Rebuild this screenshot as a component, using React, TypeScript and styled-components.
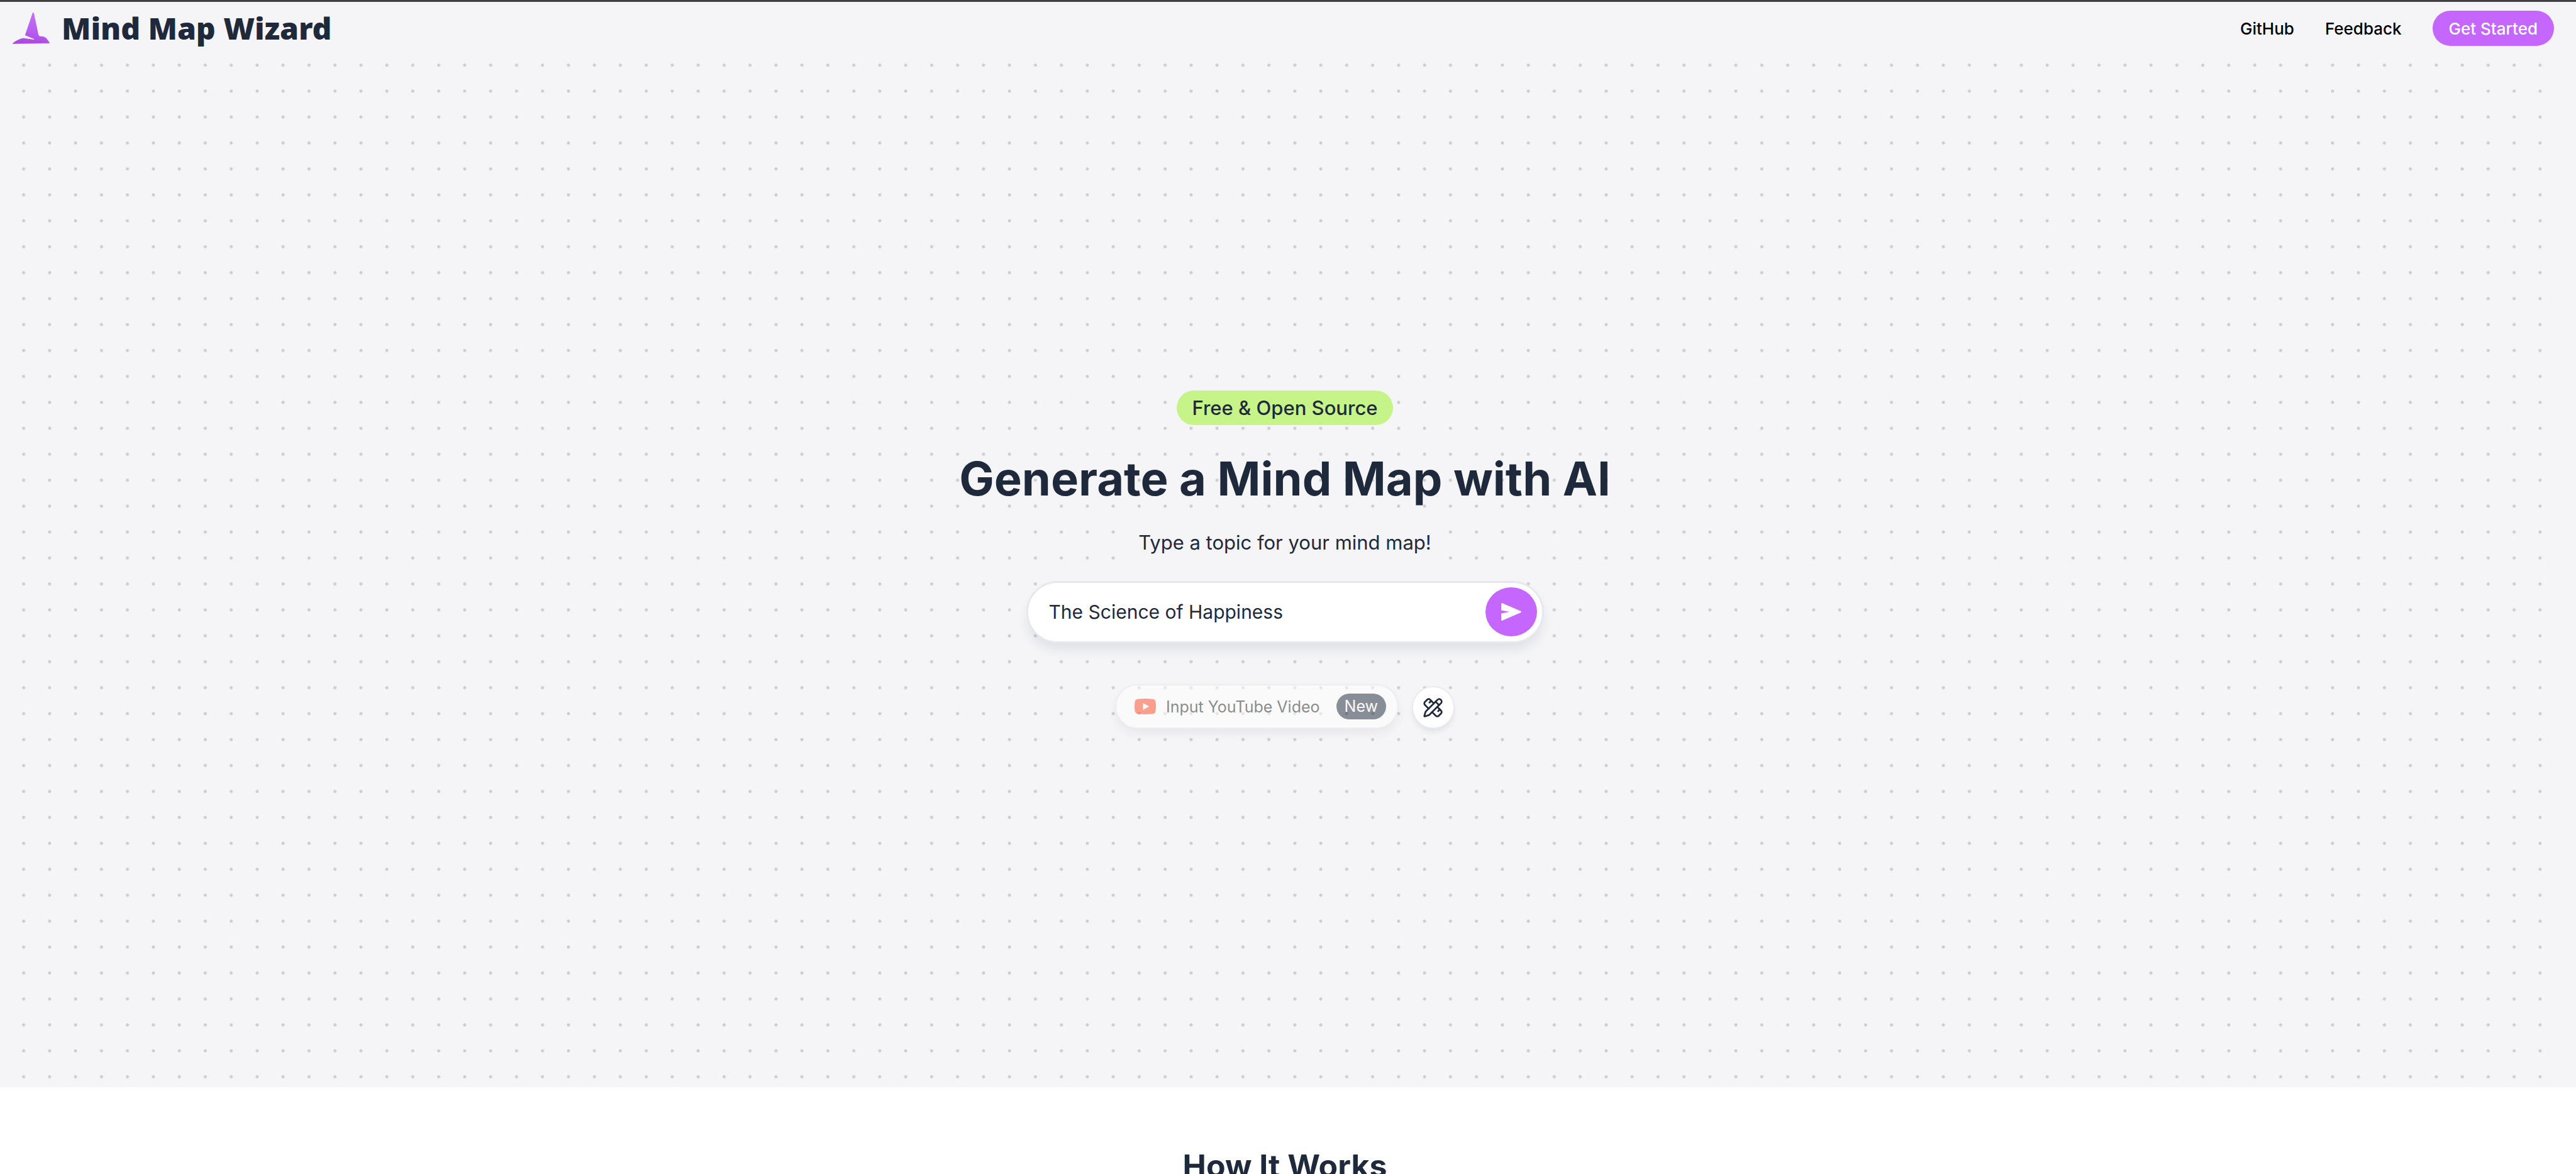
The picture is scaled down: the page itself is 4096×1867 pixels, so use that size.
import React, { useState } from "react";
import styled, { createGlobalStyle } from "styled-components";
import { PencilRuler } from "lucide-react";

const GlobalStyle = createGlobalStyle`
  *, *::before, *::after { box-sizing: border-box; }
  body {
    margin: 0;
    background: #ffffff;
    color: #1e293b;
    font-family: Inter, "Liberation Sans", sans-serif;
  }
  h1, h2, p { margin: 0; }
  button, input { font: inherit; color: inherit; border: 0; margin: 0; padding: 0; }
  button { cursor: pointer; }
`;

const Page = styled.div`
  height: 100vh;
  overflow: hidden;
  border-top: 3px solid #404040;
`;

const Hero = styled.div`
  background: #f5f5f8;
`;

const Header = styled.header`
  display: flex;
  align-items: center;
  justify-content: space-between;
  padding: 14px 35px 10px 20px;
`;

const Brand = styled.a`
  display: flex;
  align-items: center;
  gap: 19px;
  color: inherit;
  text-decoration: none;
  font-family: "Noto Sans", "Open Sans", sans-serif;
  font-size: 48px;
  font-weight: 900;
  line-height: 56px;
`;

const Nav = styled.nav`
  display: flex;
  align-items: center;
  gap: 49px;
  font-size: 26px;
  font-weight: 500;
`;

const NavLink = styled.a`
  color: #000000;
  text-decoration: none;
`;

const StartButton = styled.button`
  height: 56px;
  padding: 0 26px;
  border-radius: 28px;
  background: #c566ff;
  color: #ffffff;
`;

const DotCanvas = styled.main`
  display: flex;
  flex-direction: column;
  align-items: center;
  margin: 0 35px 0 17px;
  padding: 538px 0 570px 8px;
  background-image: radial-gradient(circle, #cdcdd0 2px, transparent 3px);
  background-size: calc(100% / 98) calc((100% + 4px) / 40);
`;

const Tag = styled.span`
  padding: 0 24px;
  border-radius: 28px;
  background: #c6f488;
  font-size: 31px;
  font-weight: 500;
  line-height: 55px;
`;

const Title = styled.h1`
  margin-top: 41px;
  font-size: 74px;
  font-weight: 700;
  line-height: 88px;
`;

const Subtitle = styled.label`
  margin-top: 30px;
  padding: 0 8px;
  background: #f5f5f8;
  font-size: 31px;
  line-height: 56px;
`;

const TopicForm = styled.form`
  display: flex;
  align-items: center;
  width: 823px;
  max-width: 100%;
  margin-top: 33px;
  padding: 7px 8px 8px 33px;
  border: 3px solid #e7e8ef;
  border-radius: 50px;
  background: #ffffff;
  box-shadow: 0 12px 18px -3px rgba(30, 41, 59, 0.1);
`;

const TopicInput = styled.input`
  flex: 1;
  min-width: 0;
  background: transparent;
  outline: none;
  font-size: 30px;
`;

const SendButton = styled.button`
  display: grid;
  place-items: center;
  width: 82px;
  height: 78px;
  border-radius: 50%;
  background: #c566ff;
`;

const Options = styled.div`
  display: flex;
  align-items: flex-end;
  gap: 21px;
  margin-top: 65px;
`;

const VideoButton = styled.button`
  display: flex;
  align-items: center;
  height: 71px;
  padding: 0 18px 0 29px;
  border: 2px solid #e3e6ec;
  border-radius: 36px;
  background: #ffffff;
  color: #222222;
  font-size: 25px;
  opacity: 0.5;
  box-shadow: 0 8px 14px -2px rgba(30, 41, 59, 0.12);
`;

const VideoLabel = styled.span`
  margin: 0 26px 0 16px;
`;

const Badge = styled.span`
  padding: 0 13px;
  border-radius: 21px;
  background: #1e293b;
  color: #ffffff;
  font-size: 25px;
  line-height: 41px;
`;

const ToolButton = styled.button`
  display: grid;
  place-items: center;
  width: 68px;
  height: 68px;
  border: 2px solid #e9ebf0;
  border-radius: 50%;
  background: #ffffff;
  box-shadow: 0 6px 10px -2px rgba(30, 41, 59, 0.1);
`;

const HowItWorks = styled.section`
  padding: 95px 10px 95px 0;
  background: #ffffff;
  text-align: center;
`;

const SectionTitle = styled.h2`
  font-size: 50px;
  font-weight: 700;
  line-height: 60px;
`;

const HatLogo = () => (
  <svg width="59" height="50" viewBox="41 41 218 185" aria-hidden="true">
    <defs>
      <linearGradient id="hat" x1="0.6" y1="0" x2="0.4" y2="1">
        <stop offset="0" stopColor="#c272f6" />
        <stop offset="0.6" stopColor="#b75cef" />
        <stop offset="1" stopColor="#aa48dc" />
      </linearGradient>
    </defs>
    <path
      fill="url(#hat)"
      d="M159 42h7L193 171Q196 180 206 181L221 182Q233 185 240 193L258 217V221L42 225V220Q75 196 104 191L160 199H169L168 196L114 174Z"
    />
  </svg>
);

const SendIcon = () => (
  <svg width="32" height="28" viewBox="0 0 117 102" aria-hidden="true">
    <path
      fill="#ffffff"
      d="M0 5Q0-2 7 1L113 46Q121 51 113 56L7 101Q0 104 0 97V60L49 51L0 42Z"
    />
  </svg>
);

const VideoIcon = () => (
  <svg width="34" height="25" viewBox="0 0 34 25" aria-hidden="true">
    <path
      fill="#ff4a24"
      d="M5 .8Q17-.8 29 .8Q32.800 1.400 33.400 5Q34.600 12.500 33.400 20Q32.800 23.600 29 24.200Q17 25.800 5 24.200Q1.200 23.600.6 20Q-.6 12.500.6 5Q1.200 1.400 5 .8Z"
    />
    <path fill="#ffffff" d="M13.500 7L23.500 12.500L13.500 18Z" />
  </svg>
);

export default function App() {
  const [topic, setTopic] = useState("The Science of Happiness");

  return (
    <Page>
      <GlobalStyle />
      <Hero>
        <Header>
          <Brand href="#">
            <HatLogo />
            Mind Map Wizard
          </Brand>
          <Nav>
            <NavLink href="#github">GitHub</NavLink>
            <NavLink href="#feedback">Feedback</NavLink>
            <StartButton type="button">Get Started</StartButton>
          </Nav>
        </Header>
        <DotCanvas>
          <Tag>Free &amp; Open Source</Tag>
          <Title>Generate a Mind Map with AI</Title>
          <Subtitle htmlFor="topic">Type a topic for your mind map!</Subtitle>
          <TopicForm onSubmit={(e) => e.preventDefault()}>
            <TopicInput
              id="topic"
              type="text"
              value={topic}
              onChange={(e) => setTopic(e.target.value)}
            />
            <SendButton type="submit" aria-label="Generate">
              <SendIcon />
            </SendButton>
          </TopicForm>
          <Options>
            <VideoButton type="button">
              <VideoIcon />
              <VideoLabel>Input YouTube Video</VideoLabel>
              <Badge>New</Badge>
            </VideoButton>
            <ToolButton type="button" aria-label="Customize">
              <PencilRuler size={33} strokeWidth={2} />
            </ToolButton>
          </Options>
        </DotCanvas>
      </Hero>
      <HowItWorks>
        <SectionTitle>How It Works</SectionTitle>
      </HowItWorks>
    </Page>
  );
}
